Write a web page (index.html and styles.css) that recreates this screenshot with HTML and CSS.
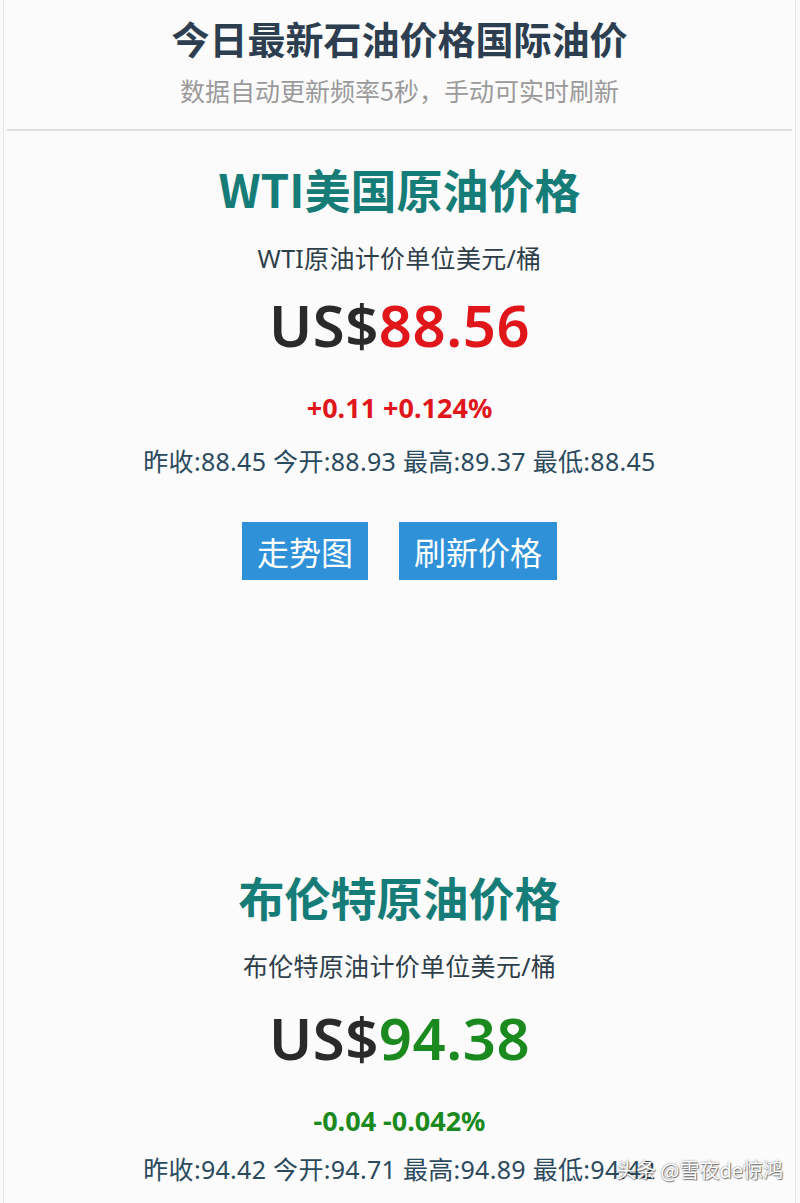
FILE: index.html
```html
<!DOCTYPE html>
<html lang="zh-CN">
<head>
<meta charset="utf-8">
<title>今日最新石油价格国际油价</title>
<link rel="stylesheet" href="styles.css">
</head>
<body>
<div class="page">
  <header class="header">
    <h1 class="title">今日最新石油价格国际油价</h1>
    <p class="subtitle">数据自动更新频率5秒，手动可实时刷新</p>
  </header>
  <hr class="divider">

  <section class="quote">
    <h2 class="quote-name">WTI美国原油价格</h2>
    <p class="quote-unit">WTI原油计价单位美元/桶</p>
    <div class="quote-price"><span class="cur">US$</span><span class="up">88.56</span></div>
    <div class="quote-change up">+0.11 +0.124%</div>
    <div class="quote-stats">昨收:88.45 今开:88.93 最高:89.37 最低:88.45</div>
    <div class="actions">
      <button class="btn">走势图</button>
      <button class="btn">刷新价格</button>
    </div>
  </section>

  <section class="quote quote-brent">
    <h2 class="quote-name">布伦特原油价格</h2>
    <p class="quote-unit">布伦特原油计价单位美元/桶</p>
    <div class="quote-price"><span class="cur">US$</span><span class="down">94.38</span></div>
    <div class="quote-change down">-0.04 -0.042%</div>
    <div class="quote-stats">昨收:94.42 今开:94.71 最高:94.89 最低:94.42</div>
  </section>

  <div class="watermark">头条 @雪夜de惊鸿</div>
</div>
</body>
</html>
```

FILE: styles.css
```css
html, body {
  margin: 0;
  padding: 0;
  background: #fafafa;
}
body {
  font-family: "Noto Sans CJK SC", "Noto Sans", sans-serif;
  color: #2c3e50;
}
.page {
  position: relative;
  height: 1203px;
  overflow: hidden;
  margin: 0 4px 0 3px;
  border-left: 1px solid #e6e6e6;
  border-right: 1px solid #e6e6e6;
  background: #fbfbfb;
}
.header {
  text-align: center;
  padding-top: 13px;
}
.title {
  margin: 0;
  font-size: 38px;
  line-height: 50px;
  font-weight: 700;
  color: #2c3e50;
}
.subtitle {
  margin: 10px 0 0;
  font-size: 25px;
  line-height: 34px;
  color: #9a9a9a;
}
.divider {
  margin: 22px 3px 0;
  border: 0;
  height: 2px;
  background: #e0e0e0;
}
.quote {
  text-align: center;
  padding-top: 27px;
}
.quote-name {
  margin: 0;
  font-size: 46px;
  line-height: 60px;
  font-weight: 700;
  color: #167c78;
}
.quote-unit {
  margin: 23px 0 0;
  font-family: "Noto Sans", "Noto Sans CJK SC", sans-serif;
  font-size: 25px;
  line-height: 34px;
  letter-spacing: 0.3px;
  color: #2f3f4a;
}
.quote-price {
  margin-top: 14px;
  font-family: "Noto Sans", "Noto Sans CJK SC", sans-serif;
  font-size: 58px;
  line-height: 72px;
  font-weight: 600;
  letter-spacing: 0.5px;
}
.cur {
  color: #2a2a2a;
}
.up {
  color: #e0161b;
}
.down {
  color: #1a8a1f;
}
.quote-change {
  margin-top: 30px;
  font-family: "Noto Sans", "Noto Sans CJK SC", sans-serif;
  font-size: 27px;
  line-height: 34px;
  font-weight: 700;
}
.quote-stats {
  margin-top: 19px;
  font-family: "Noto Sans", "Noto Sans CJK SC", sans-serif;
  font-size: 25px;
  line-height: 34px;
  letter-spacing: 0.3px;
  color: #2b4a5e;
}
.actions {
  display: flex;
  justify-content: center;
  gap: 31px;
  margin-top: 44px;
}
.btn {
  font-family: "Noto Sans CJK SC", sans-serif;
  font-size: 32px;
  line-height: 42px;
  padding: 8px 15px;
  border: 0;
  border-radius: 0;
  background: #2f91d8;
  color: #ffffff;
}
.quote-brent {
  padding-top: 286px;
}
.quote-brent .quote-price {
  margin-top: 19px;
}
.quote-brent .quote-stats {
  margin-top: 14px;
}
.watermark {
  position: absolute;
  left: 612px;
  top: 1156px;
  font-size: 20px;
  line-height: 28px;
  color: #ffffff;
  text-shadow: 0 0 2px rgba(0,0,0,0.55), 1px 1px 1px rgba(0,0,0,0.45);
}
```
